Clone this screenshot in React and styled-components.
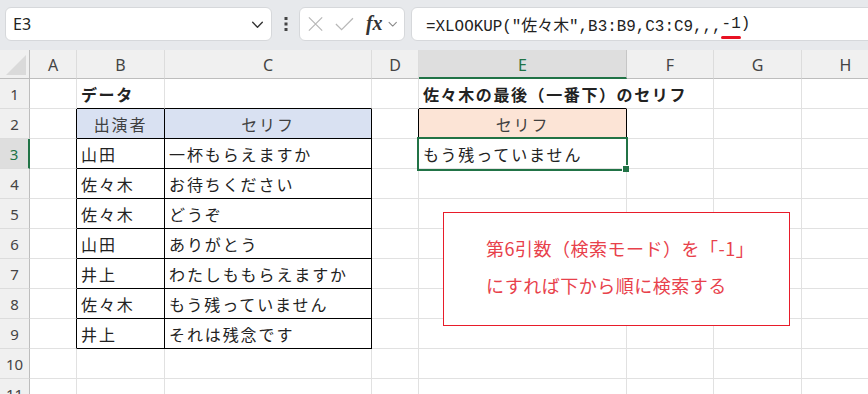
import React from 'react';
import styled, { createGlobalStyle } from 'styled-components';

const GlobalStyle = createGlobalStyle`
    body {
        margin: 0;
        background: #ffffff;
        overflow: hidden;
        font-family: "Noto Sans", "Noto Sans CJK JP", sans-serif;
    }
`

const Page = styled.div`
    width: 868px;
    height: 394px;
    overflow: hidden;
    background: #ffffff;
`

const Toolbar = styled.div`
    height: 50px;
    box-sizing: border-box;
    padding: 7px 0 9px 5px;
    display: flex;
    align-items: stretch;
    background: #e7e9ec;
    overflow: hidden;
`

const Box = styled.div`
    background: #ffffff;
    border: 1px solid #d6d8db;
    border-radius: 6px;
    display: flex;
    align-items: center;
    box-sizing: border-box;
`

const NameBox = styled(Box)`
    width: 267px;
    padding: 0 6px 0 7px;
    font-size: 16px;
    color: #222;
    justify-content: space-between;
`

const Dots = styled.div`
    width: 27px;
    display: flex;
    align-items: center;
    justify-content: center;
`

const FnBox = styled(Box)`
    width: 106px;
    padding: 0 6px 0 7px;
    gap: 0;
`

const Fx = styled.span`
    font-family: "Liberation Serif", serif;
    font-style: italic;
    font-weight: bold;
    font-size: 20px;
    color: #333;
    margin: 0 4px 2px 11px;
`

const FormulaBox = styled(Box)`
    flex: 1;
    margin-left: 6px;
    margin-right: -12px;
    padding-left: 14px;
    font-family: "Liberation Mono", "Noto Sans CJK JP", monospace;
    font-size: 15.9px;
    color: #222;
    white-space: pre;
`

const Marked = styled.span`
    position: relative;
    &::after {
        content: "";
        position: absolute;
        left: -1px;
        right: 0;
        bottom: -6px;
        height: 3px;
        border-radius: 2px;
        background: #e81123;
    }
`

const Sheet = styled.div`
    position: relative;
    display: grid;
    grid-template-columns: 30px 47px 88px 207px 47px 208px 87px 88px 88px 88px;
    grid-template-rows: 29px repeat(11, 30px);
    font-family: "Noto Sans CJK JP", sans-serif;
`

const Corner = styled.div`
    background: #f0f0f0;
    border-right: 1px solid #bdbdbd;
    border-bottom: 1px solid #bdbdbd;
    box-sizing: border-box;
    position: relative;
    &::after {
        content: "";
        position: absolute;
        right: 3px;
        bottom: 3px;
        border-style: solid;
        border-width: 0 0 20px 20px;
        border-color: transparent transparent #dadada transparent;
    }
`

const ColHead = styled.div`
    background: ${({ active }) => (active ? '#dedede' : '#f0f0f0')};
    color: ${({ active }) => (active ? '#217346' : '#444')};
    border-right: 1px solid ${({ active }) => (active ? '#c6c6c6' : '#dcdcdc')};
    border-bottom: ${({ active }) => (active ? '2px solid #217346' : '1px solid #bdbdbd')};
    box-sizing: border-box;
    display: flex;
    align-items: center;
    justify-content: center;
    font-family: "Noto Sans", sans-serif;
    font-size: 16px;
    padding-top: 2px;
`

const RowHead = styled.div`
    background: ${({ active }) => (active ? '#dedede' : '#f0f0f0')};
    color: ${({ active }) => (active ? '#217346' : '#444')};
    border-right: ${({ active }) => (active ? '2px solid #217346' : '1px solid #bdbdbd')};
    border-bottom: 1px solid #dcdcdc;
    box-sizing: border-box;
    display: flex;
    align-items: center;
    justify-content: center;
    font-family: "Noto Sans", sans-serif;
    font-size: 15px;
`

const Cell = styled.div`
    position: relative;
    box-sizing: border-box;
    border-right: 1px solid ${({ right }) => right || '#e1e1e1'};
    border-bottom: 1px solid ${({ bottom }) => bottom || '#e1e1e1'};
    ${({ spill }) => spill && 'border-right-color: transparent;'}
    background: ${({ fill }) => fill || 'transparent'};
    display: flex;
    align-items: center;
    justify-content: ${({ center }) => (center ? 'center' : 'flex-start')};
    padding-left: ${({ center }) => (center ? '0' : '4px')};
    font-size: 16px;
    font-weight: ${({ bold }) => (bold ? 700 : 400)};
    letter-spacing: ${({ bold }) => (bold ? '1.6px' : '1.9px')};
    color: ${({ head }) => (head ? '#404040' : '#222')};
    white-space: nowrap;
    z-index: ${({ spill }) => (spill ? 1 : 0)};
    ${({ active }) => active && `
        z-index: 2;
        &::before {
            content: "";
            position: absolute;
            top: -2px;
            left: -2px;
            right: -2px;
            bottom: -3px;
            border: 2px solid #217346;
        }
        &::after {
            content: "";
            position: absolute;
            right: -3px;
            bottom: -4px;
            width: 6px;
            height: 6px;
            background: #217346;
            border: 1px solid #ffffff;
            border-right: none;
            border-bottom: none;
        }
    `}
`

const Note = styled.div`
    position: absolute;
    left: 443px;
    top: 162px;
    width: 347px;
    height: 114px;
    box-sizing: border-box;
    border: 1.5px solid #e81c2a;
    background: #ffffff;
    padding: 17px 0 0 42px;
    color: #e8414b;
    font-family: "Noto Sans CJK JP", sans-serif;
    font-size: 18px;
    letter-spacing: 0.5px;
    line-height: 37px;
    z-index: 3;
`

const cols = ['A', 'B', 'C', 'D', 'E', 'F', 'G', 'H', 'I']
const shownCols = ['A', 'B', 'C', 'D', 'E', 'F', 'G', 'H', '']

const BLACK = '#000000'
const BLUE = '#d9e1f2'
const PEACH = '#fce4d6'

const rows = {
    1: { B: { text: 'データ', bold: true }, E: { text: '佐々木の最後（一番下）のセリフ', bold: true, spill: true } },
    2: {
        B: { text: '出演者', head: true, center: true, fill: BLUE },
        C: { text: 'セリフ', head: true, center: true, fill: BLUE },
        E: { text: 'セリフ', head: true, center: true, fill: PEACH },
    },
    3: { B: { text: '山田' }, C: { text: '一杯もらえますか' }, E: { text: 'もう残っていません', active: true } },
    4: { B: { text: '佐々木' }, C: { text: 'お待ちください' } },
    5: { B: { text: '佐々木' }, C: { text: 'どうぞ' } },
    6: { B: { text: '山田' }, C: { text: 'ありがとう' } },
    7: { B: { text: '井上' }, C: { text: 'わたしももらえますか' } },
    8: { B: { text: '佐々木' }, C: { text: 'もう残っていません' } },
    9: { B: { text: '井上' }, C: { text: 'それは残念です' } },
}

// black borders of the two tables (B2:C9 and E2)
function edges(col, row) {
    const inMain = (c, r) => (c === 'B' || c === 'C') && r >= 2 && r <= 9
    const inSide = (c, r) => c === 'E' && r === 2
    const inBox = (c, r) => inMain(c, r) || inSide(c, r)
    const next = cols[cols.indexOf(col) + 1]
    const right = inBox(col, row) || inBox(next, row) ? BLACK : null
    const bottom = inBox(col, row) || inBox(col, row + 1) ? BLACK : null
    return { right, bottom }
}

const Chevron = ({ size = 14, color = '#333' }) => (
    <svg width={size} height={size} viewBox="0 0 14 14" fill="none">
        <path d="M2.5 5 L7 9.5 L11.5 5" stroke={color} strokeWidth="1.3" strokeLinecap="round" strokeLinejoin="round" />
    </svg>
)

const App = () => {
    const grid = []
    grid.push(<Corner key="corner" />)
    shownCols.forEach((c, i) => {
        grid.push(<ColHead key={'h' + i} active={c === 'E'}>{c}</ColHead>)
    })
    for (let r = 1; r <= 11; r++) {
        grid.push(<RowHead key={'r' + r} active={r === 3}>{r}</RowHead>)
        cols.forEach((c) => {
            const cell = (rows[r] && rows[r][c]) || {}
            const { right, bottom } = edges(c, r)
            grid.push(
                <Cell
                    key={c + r}
                    right={right}
                    bottom={bottom}
                    bold={cell.bold}
                    head={cell.head}
                    center={cell.center}
                    fill={cell.fill}
                    spill={cell.spill}
                    active={cell.active}
                >
                    {cell.text}
                </Cell>
            )
        })
    }

    return (
        <Page>
            <GlobalStyle />
            <Toolbar>
                <NameBox>
                    <span>E3</span>
                    <Chevron size={15} />
                </NameBox>
                <Dots>
                    <svg width="4" height="14" viewBox="0 0 4 14">
                        <rect x="0.5" y="0" width="3" height="3" fill="#444" />
                        <rect x="0.5" y="5.5" width="3" height="3" fill="#444" />
                        <rect x="0.5" y="11" width="3" height="3" fill="#444" />
                    </svg>
                </Dots>
                <FnBox>
                    <svg width="18" height="18" viewBox="0 0 18 18">
                        <path d="M2 2 L16 16 M16 2 L2 16" stroke="#b8b8b8" strokeWidth="1.3" />
                    </svg>
                    <svg width="22" height="18" viewBox="0 0 22 18" style={{ marginLeft: 10 }}>
                        <path d="M2 9 L8 15 L20 3" stroke="#b8b8b8" strokeWidth="1.3" fill="none" />
                    </svg>
                    <Fx>fx</Fx>
                    <Chevron size={12} color="#888" />
                </FnBox>
                <FormulaBox>
                    =XLOOKUP("佐々木",B3:B9,C3:C9,,,<Marked>-1</Marked>)
                </FormulaBox>
            </Toolbar>
            <Sheet>
                {grid}
                <Note>
                    第6引数（検索モード）を「-1」<br />
                    にすれば下から順に検索する
                </Note>
            </Sheet>
        </Page>
    )
}

export default App
